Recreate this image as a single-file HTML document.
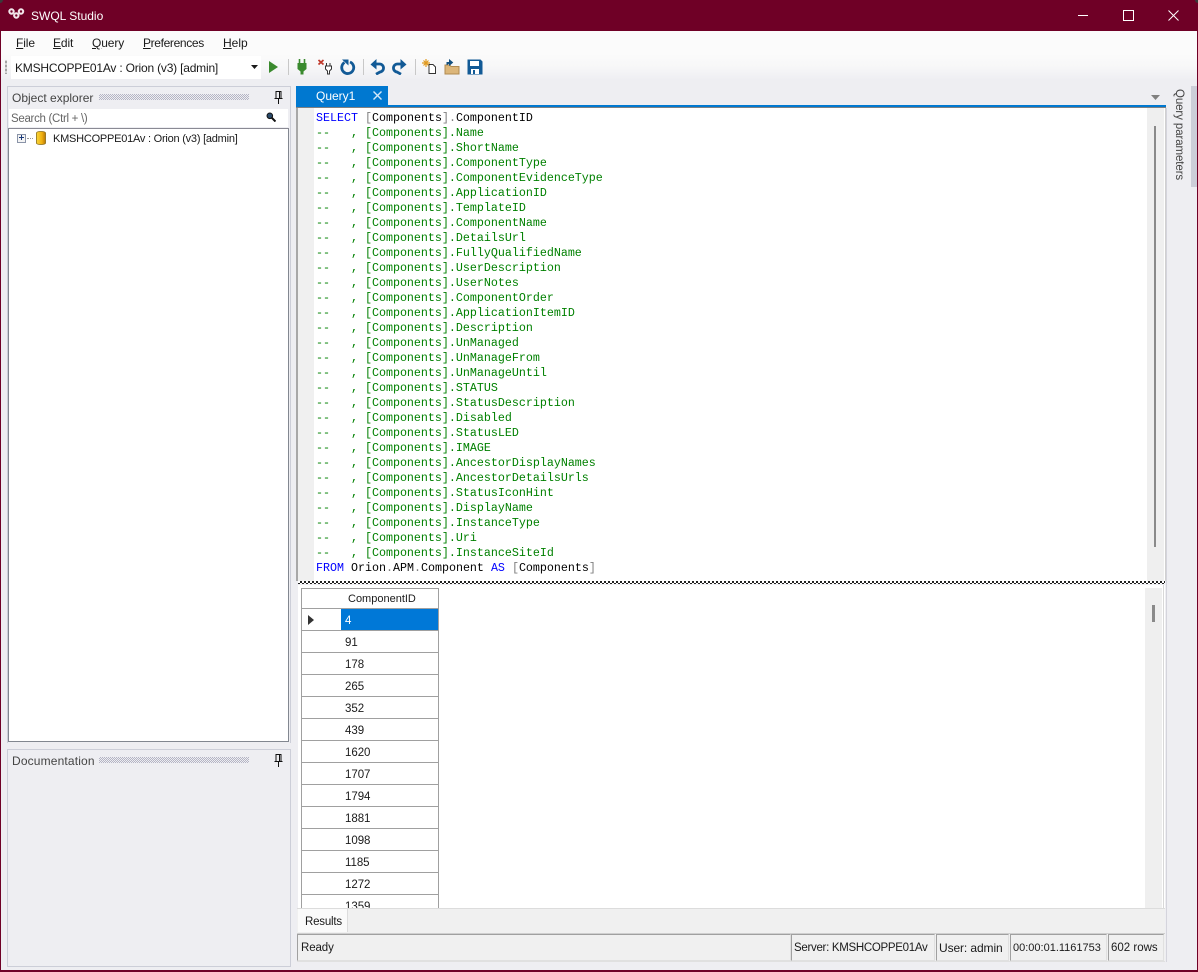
<!DOCTYPE html>
<html><head><meta charset="utf-8"><title>SWQL Studio</title>
<style>
html,body{margin:0;padding:0;width:1198px;height:972px;overflow:hidden;background:#eeeef2;font-family:"Liberation Sans",sans-serif;font-size:12px;color:#1a1a1a}
div,span.a,svg{position:absolute}
.t{white-space:nowrap;line-height:16px}
.code{font-family:"Liberation Mono",monospace;font-size:11.67px;line-height:15px;white-space:pre;color:#008000;left:316px;top:111px}
.b{color:#0000ff}.k{color:#000}.g{color:#808080}
u{text-decoration:underline}
.rh{left:302px;width:39px;height:21px;background:#fff;border-right:1px solid #a0a0a0;border-bottom:1px solid #a0a0a0}
.c{left:341px;width:97px;height:21px;background:#fff;border-right:1px solid #a0a0a0;border-bottom:1px solid #a0a0a0;line-height:25px;text-indent:4px;font-size:11.5px;letter-spacing:-.05px}
.sb{top:934px;height:25px;background:#f0f0f0;border:1px solid #a0a0a0;border-bottom:1px solid #e0e0e0;border-right:1px solid #e0e0e0;line-height:27px;text-indent:2px;white-space:nowrap;font-size:11.5px;overflow:hidden}
.grip{height:6px;background-image:conic-gradient(#b4b4c4 25%,transparent 0 50%,#b4b4c4 0 75%,transparent 0);background-size:2px 2px}
</style></head><body>
<div style="left:0;top:0;width:1198px;height:972px;background:#6f0026"></div>
<div style="left:1px;top:31px;width:1196px;height:939px;background:#eeeef2"></div>
<div style="left:1px;top:31px;width:1196px;height:23px;background:#fbfbfb"></div>
<div style="left:1px;top:54px;width:1196px;height:26px;background:linear-gradient(#fbfbfb,#f7f7f8 50%,#eeeef2)"></div>
<div style="left:0;top:0;width:3px;height:3px;background:#3a3a3a;border-bottom-right-radius:3px"></div>
<div style="right:0;top:0;width:3px;height:3px;background:#3a3a3a;border-bottom-left-radius:3px"></div>

<svg style="left:8px;top:8px" width="17" height="12" viewBox="0 0 17 12" fill="none" stroke="#f2e6ea" stroke-width="2"><circle cx="3.500" cy="3.500" r="2.200"/><circle cx="13" cy="3.500" r="2.200"/><circle cx="8.300" cy="7.500" r="2.200"/></svg>
<div class="t" style="left:31px;top:8px;color:#fff;font-size:12px">SWQL Studio</div>
<div style="left:1078px;top:15px;width:10px;height:1px;background:#fff"></div>
<div style="left:1123px;top:10px;width:9px;height:9px;border:1px solid #fff"></div>
<svg style="left:1168px;top:10px" width="11" height="11" viewBox="0 0 11 11" stroke="#fff" stroke-width="1"><path d="M.5.5l10 10M10.500.5l-10 10"/></svg>

<div class="t" style="left:16px;top:35px;letter-spacing:-.1px"><u>F</u>ile</div>
<div class="t" style="left:53px;top:35px;letter-spacing:-.1px"><u>E</u>dit</div>
<div class="t" style="left:92px;top:35px;letter-spacing:-.1px"><u>Q</u>uery</div>
<div class="t" style="left:143px;top:35px;letter-spacing:-.35px"><u>P</u>references</div>
<div class="t" style="left:223px;top:35px"><u>H</u>elp</div>

<div style="left:5px;top:60px;width:2px;height:14px;background-image:radial-gradient(#a0a0a0 .8px,transparent 1px);background-size:2px 4px"></div>
<div style="left:11px;top:56px;width:250px;height:23px;background:#fff"></div>
<div class="t" style="left:15px;top:60px;letter-spacing:-.2px">KMSHCOPPE01Av : Orion (v3) [admin]</div>
<svg style="left:251px;top:65px" width="7" height="4"><path d="M0 0h7L3.500 4z" fill="#1a1a1a"/></svg>
<svg style="left:268px;top:61px" width="11" height="12"><path d="M1 0l9 6-9 6z" fill="#3a8a2e"/></svg>
<div style="left:288px;top:59px;width:1px;height:16px;background:#c8c8c8"></div>
<svg style="left:296px;top:58px" width="12" height="18" viewBox="0 0 12 18"><path d="M3.500 1v4M8.500 1v4" stroke="#3a8a2e" stroke-width="1.600"/><path d="M1.500 5h9v6l-3 2.500v3h-3v-3l-3-2.500z" fill="#3a8a2e"/></svg>
<svg style="left:318px;top:59px" width="15" height="16" viewBox="0 0 15 16"><path d="M.5 1l5 4.500M5.500 1l-5 4.500" stroke="#c0392b" stroke-width="1.700"/><path d="M8.500 4v3M12 4v3M7.500 7h6v3l-2 2v3h-2v-3l-2-2z" fill="#fff" stroke="#333" stroke-width="1"/></svg>
<svg style="left:339px;top:58px" width="17" height="17" viewBox="0 0 17 17" fill="none"><path d="M5.500 4.500A6 6 0 1 0 11 4" stroke="#125a96" stroke-width="2.800"/><path d="M3 1.500h6.500V7.500z" fill="#125a96"/></svg>
<div style="left:363px;top:59px;width:1px;height:16px;background:#c8c8c8"></div>
<svg style="left:370px;top:59px" width="15" height="16" viewBox="0 0 15 16" fill="none"><path d="M4 5h5a4 4 0 0 1 1 8L6 15.200" stroke="#125a96" stroke-width="2.800"/><path d="M6.500 0L.5 5.500l6 5z" fill="#125a96"/></svg>
<svg style="left:392px;top:59px" width="15" height="16" viewBox="0 0 15 16" fill="none"><path d="M11 5H6a4 4 0 0 0-1 8L9 15.200" stroke="#125a96" stroke-width="2.800"/><path d="M8.500 0l6 5.500-6 5z" fill="#125a96"/></svg>
<div style="left:415px;top:59px;width:1px;height:16px;background:#c8c8c8"></div>
<svg style="left:422px;top:59px" width="15" height="16" viewBox="0 0 15 16"><path d="M7 5.500h4l2.500 2.500v6.500H7z" fill="#fff" stroke="#333"/><path d="M4 0v8M0 4h8M1.500 1.500l5 5M6.500 1.500l-5 5" stroke="#e09a20" stroke-width="1.200"/></svg>
<svg style="left:444px;top:58px" width="16" height="17" viewBox="0 0 16 17"><path d="M1 7h5l1 1.500h8V16H1z" fill="#dcb67a" stroke="#b08a50"/><path d="M3 7V4.500h4M5.500 2l3 2.500-3 2.500z" fill="#14507f" stroke="#14507f"/></svg>
<svg style="left:467px;top:59px" width="16" height="16" viewBox="0 0 16 16"><path d="M0.500.500h13l2 2v13H.500z" fill="#125a96"/><path d="M3 2h9v5H3z" fill="#fff"/><path d="M4 10h8v5H4z" fill="#fff"/><path d="M6 11h2v4H6z" fill="#125a96"/></svg>

<!-- left panels -->
<div style="left:7px;top:86px;width:282px;height:656px;border:1px solid #ccced8;border-bottom:0"></div>
<div class="t" style="left:12px;top:90px;color:#444">Object explorer</div>
<div class="grip" style="left:99px;top:94px;width:150px"></div>
<svg style="left:274px;top:91px" width="9" height="13" viewBox="0 0 9 13"><path d="M2 .500h5v7H2zM.500 7.500h8M4.500 8v5M5.500 1v6" fill="none" stroke="#111" stroke-width="1"/></svg>
<div style="left:9px;top:109px;width:279px;height:18px;background:#fff"></div>
<div class="t" style="left:11px;top:111px;color:#666;font-size:11.5px;letter-spacing:-.3px">Search (Ctrl + \)</div>
<svg style="left:266px;top:112px" width="10" height="10" viewBox="0 0 10 10"><circle cx="3.800" cy="3.800" r="2.800" fill="#2a4a6a" stroke="#111"/><path d="M5.500 5.500L9.500 9.500" stroke="#111" stroke-width="2"/></svg>
<div style="left:8px;top:128px;width:279px;height:612px;background:#fff;border:1px solid #828790;border-top:1px solid #8a8a94"></div>
<div style="left:17px;top:134px;width:7px;height:7px;border:1px solid #8a94a8;background:#f4f4f4"></div>
<div style="left:19px;top:137px;width:5px;height:1px;background:#1a3a7a"></div>
<div style="left:21px;top:135px;width:1px;height:5px;background:#1a3a7a"></div>
<div style="left:27px;top:138px;width:6px;height:0;border-top:1px dotted #999"></div>
<svg style="left:35px;top:131px" width="12" height="14" viewBox="0 0 12 14"><defs><linearGradient id="d" x1="0" x2="1" y1="0" y2="0"><stop offset="0" stop-color="#f8d63a"/><stop offset=".6" stop-color="#f0b010"/><stop offset="1" stop-color="#b87808"/></linearGradient></defs><path d="M1.500 2c0-2 9-2 9 0v10c0 2-9 2-9 0z" fill="url(#d)" stroke="#8a6a10" stroke-width=".8"/></svg>
<div class="t" style="left:53px;top:131px;font-size:11px;letter-spacing:-.23px">KMSHCOPPE01Av : Orion (v3) [admin]</div>

<div style="left:7px;top:749px;width:282px;height:216px;border:1px solid #ccced8"></div>
<div class="t" style="left:12px;top:753px;color:#444;letter-spacing:.15px">Documentation</div>
<div class="grip" style="left:99px;top:757px;width:150px"></div>
<svg style="left:274px;top:754px" width="9" height="13" viewBox="0 0 9 13"><path d="M2 .500h5v7H2zM.500 7.500h8M4.500 8v5M5.500 1v6" fill="none" stroke="#111" stroke-width="1"/></svg>

<!-- tabs -->
<div style="left:296px;top:86px;width:92px;height:19px;background:#0078d0"></div>
<div class="t" style="left:316px;top:88px;color:#fff">Query1</div>
<svg style="left:373px;top:91px" width="9" height="9" stroke="#d4e8f8" stroke-width="1.400"><path d="M.5.5l8 8M8.500.5l-8 8"/></svg>
<svg style="left:1151px;top:95px" width="9" height="5"><path d="M0 0h9L4.500 5z" fill="#808080"/></svg>
<div style="left:296px;top:105px;width:870px;height:2px;background:#0078d0"></div>
<div style="left:296px;top:107px;width:870px;height:1px;background:#808080"></div>

<!-- editor -->
<div style="left:296px;top:108px;width:2px;height:473px;background:#a8a8a8"></div>
<div style="left:298px;top:108px;width:868px;height:473px;background:#fff"></div>
<div style="left:298px;top:108px;width:16px;height:473px;background:#f0f0f0"></div>
<div style="left:1147px;top:108px;width:17px;height:473px;background:#efefef"></div>
<div style="left:1154px;top:126px;width:2px;height:421px;background:#8a8a8a"></div>
<div style="left:1165px;top:108px;width:1px;height:473px;background:#d0d0d0"></div>
<div class="code"><span class="b">SELECT</span> <span class="g">[</span><span class="k">Components</span><span class="g">]</span><span class="g">.</span><span class="k">ComponentID</span>
--   , [Components].Name
--   , [Components].ShortName
--   , [Components].ComponentType
--   , [Components].ComponentEvidenceType
--   , [Components].ApplicationID
--   , [Components].TemplateID
--   , [Components].ComponentName
--   , [Components].DetailsUrl
--   , [Components].FullyQualifiedName
--   , [Components].UserDescription
--   , [Components].UserNotes
--   , [Components].ComponentOrder
--   , [Components].ApplicationItemID
--   , [Components].Description
--   , [Components].UnManaged
--   , [Components].UnManageFrom
--   , [Components].UnManageUntil
--   , [Components].STATUS
--   , [Components].StatusDescription
--   , [Components].Disabled
--   , [Components].StatusLED
--   , [Components].IMAGE
--   , [Components].AncestorDisplayNames
--   , [Components].AncestorDetailsUrls
--   , [Components].StatusIconHint
--   , [Components].DisplayName
--   , [Components].InstanceType
--   , [Components].Uri
--   , [Components].InstanceSiteId
<span class="b">FROM</span> <span class="k">Orion</span><span class="g">.</span><span class="k">APM</span><span class="g">.</span><span class="k">Component</span> <span class="b">AS</span> <span class="g">[</span><span class="k">Components</span><span class="g">]</span></div>

<!-- splitter -->
<div style="left:298px;top:581px;width:867px;height:3px;background-image:conic-gradient(#222 25%,#fff 0 50%,#222 0 75%,#fff 0);background-size:4px 4px"></div>

<!-- results -->
<div style="left:298px;top:585px;width:867px;height:323px;background:#fff;overflow:hidden">
</div>
<div style="left:1145px;top:588px;width:17px;height:320px;background:#efefef"></div>
<div style="left:1152px;top:605px;width:3px;height:17px;background:#8a8a8a"></div>
<div style="left:1163px;top:585px;width:1px;height:323px;background:#d8d8d8"></div>
<div style="left:302px;top:588px;width:137px;height:320px;overflow:hidden;background:#fff" id="g"></div>
<div style="left:302px;top:588px;width:137px;height:1px;background:#a0a0a0;"></div>
<div style="left:301px;top:588px;width:1px;height:320px;background:#a0a0a0"></div>
<div class="rh" style="top:589px;height:19px"></div>
<div class="c" style="top:589px;height:19px;line-height:20px;text-indent:7px;font-size:11px;letter-spacing:0">ComponentID</div>
<div class="rh" style="top:609px"></div><div class="c" style="top:609px;background:#0078d7;color:#fff">4</div>
<svg style="left:308px;top:615px" width="6" height="10"><path d="M0 0l6 5-6 5z" fill="#333"/></svg>
<div class="rh" style="top:631px"></div><div class="c" style="top:631px">91</div>
<div class="rh" style="top:653px"></div><div class="c" style="top:653px">178</div>
<div class="rh" style="top:675px"></div><div class="c" style="top:675px">265</div>
<div class="rh" style="top:697px"></div><div class="c" style="top:697px">352</div>
<div class="rh" style="top:719px"></div><div class="c" style="top:719px">439</div>
<div class="rh" style="top:741px"></div><div class="c" style="top:741px">1620</div>
<div class="rh" style="top:763px"></div><div class="c" style="top:763px">1707</div>
<div class="rh" style="top:785px"></div><div class="c" style="top:785px">1794</div>
<div class="rh" style="top:807px"></div><div class="c" style="top:807px">1881</div>
<div class="rh" style="top:829px"></div><div class="c" style="top:829px">1098</div>
<div class="rh" style="top:851px"></div><div class="c" style="top:851px">1185</div>
<div class="rh" style="top:873px"></div><div class="c" style="top:873px">1272</div>
<div class="rh" style="top:895px;height:13px;border-bottom:0"></div><div class="c" style="top:895px;height:13px;border-bottom:0;overflow:hidden">1359</div>

<!-- bottom tabs -->
<div style="left:297px;top:908px;width:868px;height:24px;background:#f0f0f0;border-top:1px solid #dcdcdc"></div>
<div style="left:298px;top:909px;width:49px;height:23px;background:#fafafa;border-right:1px solid #dcdcdc"></div>
<div class="t" style="left:305px;top:914px;font-size:11.5px;letter-spacing:-.2px">Results</div>
<div style="left:297px;top:933px;width:868px;height:1px;background:#cfcfcf"></div>

<!-- status -->
<div style="left:297px;top:934px;width:868px;height:27px;background:#f0f0f0;border-bottom:1px solid #e0e0e0"></div>
<div class="sb" style="left:297px;width:492px;text-indent:3px;letter-spacing:-.1px">Ready</div>
<div class="sb" style="left:791px;width:142px;letter-spacing:-.3px">Server: KMSHCOPPE01Av</div>
<div class="sb" style="left:936px;width:71px;font-size:12px;letter-spacing:-.1px">User: admin</div>
<div class="sb" style="left:1010px;width:95px;font-size:11px">00:00:01.1161753</div>
<div class="sb" style="left:1108px;width:54px">602 rows</div>
<div style="left:1166px;top:108px;width:1px;height:854px;background:#d4d4dc"></div>

<!-- side -->
<div class="t" style="left:1171px;top:89px;writing-mode:vertical-rl;color:#444;font-size:11.5px;letter-spacing:-.1px;line-height:16px">Query parameters</div>
<div style="left:1191px;top:86px;width:6px;height:101px;background:#ccced8"></div>
</body></html>
